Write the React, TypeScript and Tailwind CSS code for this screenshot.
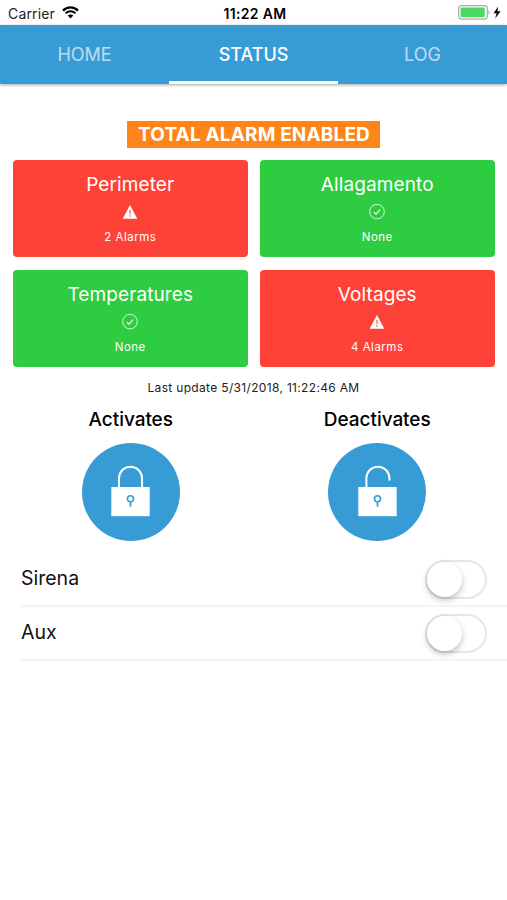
import React from 'react';

interface Zone {
  id: string;
  name: string;
  alarms: number;
}

const zones: Zone[] = [
  { id: 'perimeter', name: 'Perimeter', alarms: 2 },
  { id: 'water', name: 'Allagamento', alarms: 0 },
  { id: 'temperatures', name: 'Temperatures', alarms: 0 },
  { id: 'voltages', name: 'Voltages', alarms: 4 },
];

const tabs = ['HOME', 'STATUS', 'LOG'];

const WifiIcon: React.FC = () => (
  <svg className="-mt-[2px] w-[17px] h-[13px]" viewBox="0 0 17 13" fill="none" stroke="#000">
    <path d="M1 4.6C5.2 .3 11.8 .3 16 4.6" strokeWidth="2.3" />
    <path d="M3.6 7.2c2.8-2.7 7-2.7 9.8 0" strokeWidth="2.1" />
    <path d="M8.5 12.4 5.7 9.5c1.6-1.4 4-1.4 5.6 0z" fill="#000" stroke="none" />
  </svg>
);

const BatteryIcon: React.FC = () => (
  <svg className="-mt-[2px] w-[44px] h-[15px]" viewBox="0 0 44 15" fill="none">
    <rect x=".7" y=".7" width="28.6" height="13.4" rx="2.8" stroke="#a9a9a9" strokeWidth="1.2" />
    <rect x="2.6" y="2.6" width="24.2" height="9.6" rx="1" fill="#4cd964" />
    <path d="M30.5 5.2c1.6.8 1.6 3.6 0 4.4z" fill="#a9a9a9" />
    <path d="M40.2 1.6 35.6 8.2h3l-1.4 5.4 5.4-7.4h-3.2z" fill="#000" />
  </svg>
);

const WarningIcon: React.FC = () => (
  <svg className="w-4 h-4" viewBox="0 0 16 16">
    <path d="M8 1 15.3 14.7H.7z" fill="#fff" />
    <path d="M7.4 6h1.2l-.2 4.5h-.8z" fill="#ff4238" />
    <circle cx="8" cy="12.1" r=".75" fill="#ff4238" />
  </svg>
);

const CheckIcon: React.FC = () => (
  <svg className="w-4 h-4" viewBox="0 0 16 16" fill="none" stroke="#fff">
    <circle cx="8" cy="7.6" r="7.3" strokeWidth=".8" />
    <path d="m4.9 8.1 2.1 2 4.2-4.6" strokeWidth="1.1" />
  </svg>
);

const LockIcon: React.FC<{ open?: boolean }> = ({ open }) => (
  <svg className="-mt-[2px] w-[39px] h-[52px]" viewBox="0 0 39 52" fill="none">
    <path
      d={open ? 'M8.4 23V13.2a11.5 11.5 0 0 1 23 0V15.5' : 'M8 23V13.2a11.5 11.5 0 0 1 23 0V23'}
      stroke="#fff"
      strokeWidth="2"
    />
    <rect x=".3" y="22" width="38.4" height="29.2" fill="#fff" />
    <circle cx="19.5" cy="33.8" r="3" stroke="#379cd6" strokeWidth="1.6" />
    <path d="M19.5 36.6v5" stroke="#379cd6" strokeWidth="1.8" />
  </svg>
);

const StatusBar: React.FC = () => (
  <div className="flex h-[25px] items-center justify-between pt-[2px] pl-2 pr-[5px] text-[14px] text-black">
    <div className="flex w-24 items-center gap-[7px]">
      <span className="tracking-[0.15px] text-[#222]">Carrier</span>
      <WifiIcon />
    </div>
    <span className="text-[14px] font-semibold tracking-[0.35px]">11:22 AM</span>
    <div className="flex w-24 justify-end">
      <BatteryIcon />
    </div>
  </div>
);

const ZoneCard: React.FC<{ zone: Zone }> = ({ zone }) => {
  const hasAlarms = zone.alarms > 0;
  return (
    <div
      className={`flex h-[97.5px] flex-col items-center rounded-[4px] text-white ${
        hasAlarms ? 'bg-[#ff4238]' : 'bg-[#2ecc40]'
      }`}
    >
      <h2 className="mt-3 h-6 text-[19px] leading-[25px] tracking-[0.1px]">{zone.name}</h2>
      <div className="mt-[8px]">{hasAlarms ? <WarningIcon /> : <CheckIcon />}</div>
      <p className="mt-[8.5px] text-[11.5px] leading-[18px] tracking-[0.5px]">
        {hasAlarms ? `${zone.alarms} Alarms` : 'None'}
      </p>
    </div>
  );
};

const LockButton: React.FC<{ label: string; open?: boolean }> = ({ label, open }) => (
  <div className="flex flex-col items-center">
    <span className="text-[19px] leading-6 font-medium tracking-[-0.05px] text-black">{label}</span>
    <button className="mt-[10.5px] flex h-[98px] w-[98px] items-center justify-center rounded-full bg-[#379cd6]">
      <LockIcon open={open} />
    </button>
  </div>
);

const SwitchRow: React.FC<{ label: string }> = ({ label }) => (
  <div className="ml-[21px] flex h-[54px] items-center justify-between border-b-2 border-[#f4f4f4] pr-5">
    <span className="text-[19.5px] text-[#111]">{label}</span>
    <div className="h-[39px] w-[62px] rounded-full border-2 border-[#e6e6e6] bg-white">
      <div className="h-[35px] w-[35px] rounded-full bg-white shadow-[0_3px_6px_rgba(0,0,0,0.25)]" />
    </div>
  </div>
);

const App: React.FC = () => {
  return (
    <div className="h-[900px] w-[507px] overflow-hidden bg-white font-['Inter','Liberation_Sans',sans-serif]">
      <StatusBar />

      <nav className="grid h-[59px] grid-cols-3 bg-[#379cd6] text-[18px] shadow-[0_1px_3px_rgba(0,0,0,0.35)]">
        {tabs.map(tab => (
          <div
            key={tab}
            className={`flex items-center justify-center border-b-[3px] pt-[3px] ${
              tab === 'STATUS' ? 'border-white font-medium text-white' : 'border-transparent text-white/65'
            }`}
          >
            {tab}
          </div>
        ))}
      </nav>

      <main>
        {/* Global alarm state */}
        <div className="mt-[36.5px] flex justify-center">
          <span className="flex h-[27px] w-[253px] items-center justify-center bg-[#ff851b] pt-[2px] pl-[1px] text-[19px] font-bold tracking-[0.15px] whitespace-nowrap text-white">
            TOTAL ALARM ENABLED
          </span>
        </div>

        <div className="mt-[12px] grid grid-cols-2 gap-[12.5px] pr-[12.5px] pl-[13px]">
          {zones.map(zone => (
            <ZoneCard key={zone.id} zone={zone} />
          ))}
        </div>

        <p className="mt-[12px] text-center text-[12px] leading-[18px] tracking-[0.33px] text-[#222]">
          Last update 5/31/2018, 11:22:46 AM
        </p>

        <div className="mt-[11px] grid grid-cols-2 gap-3 pr-[12.5px] pl-[13.5px]">
          <LockButton label="Activates" />
          <LockButton label="Deactivates" open />
        </div>

        <div className="mt-[12.5px]">
          <SwitchRow label="Sirena" />
          <SwitchRow label="Aux" />
        </div>
      </main>
    </div>
  );
};

export default App;
